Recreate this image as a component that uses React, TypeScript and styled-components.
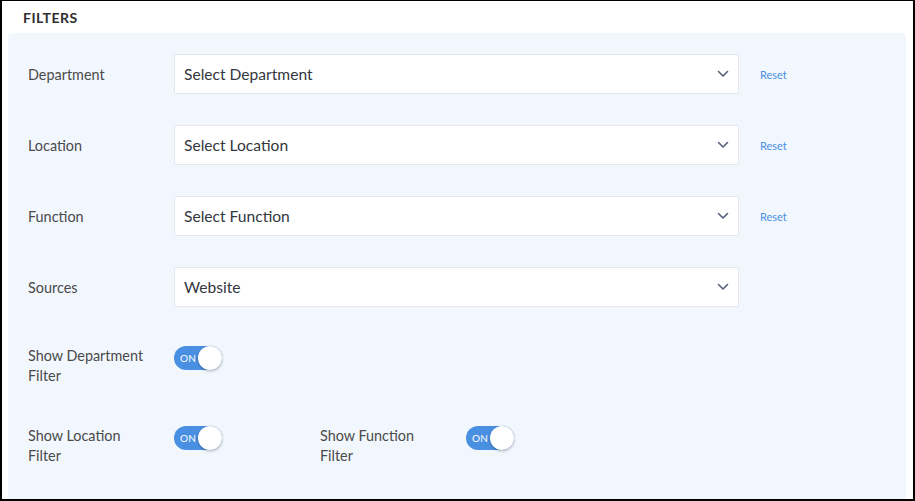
import { useState } from 'react'
import styled, { createGlobalStyle } from 'styled-components'

const GlobalStyle = createGlobalStyle`
	html, body {
		margin: 0;
		padding: 0;
		background: #ffffff;
	}
	body {
		font-family: 'Lato', 'Open Sans', sans-serif;
		color: #4a4a4a;
	}
`

type SelectRow = {
	label: string
	value: string
	resettable: boolean
}

const selectRows: SelectRow[] = [
	{ label: 'Department', value: 'Select Department', resettable: true },
	{ label: 'Location', value: 'Select Location', resettable: true },
	{ label: 'Function', value: 'Select Function', resettable: true },
	{ label: 'Sources', value: 'Website', resettable: false },
]

function Chevron() {
	return (
		<svg width="12" height="8" viewBox="0 0 12 8" fill="none">
			<path
				d="M1.5 1.5L6 6L10.5 1.5"
				stroke="#55607a"
				strokeWidth="1.6"
				strokeLinecap="round"
				strokeLinejoin="round"
			/>
		</svg>
	)
}

function Toggle({ initial }: { initial: boolean }) {
	const [isOn, setIsOn] = useState(initial)
	return (
		<Track $on={isOn} onClick={() => setIsOn(!isOn)}>
			<TrackText>{isOn ? 'ON' : 'OFF'}</TrackText>
			<Knob $on={isOn} />
		</Track>
	)
}

function App() {
	return (
		<>
			<GlobalStyle />
			<Frame>
				<Title>FILTERS</Title>
				<Panel>
					{selectRows.map((row) => (
						<Row key={row.label}>
							<Label>{row.label}</Label>
							<SelectBox>
								<SelectText>{row.value}</SelectText>
								<Chevron />
							</SelectBox>
							{row.resettable && <ResetLink>Reset</ResetLink>}
						</Row>
					))}
					<ToggleRow>
						<ToggleLabel>
							Show Department
							<br />
							Filter
						</ToggleLabel>
						<ToggleCell>
							<Toggle initial />
						</ToggleCell>
					</ToggleRow>
					<ToggleRow>
						<ToggleLabel>
							Show Location
							<br />
							Filter
						</ToggleLabel>
						<ToggleCell>
							<Toggle initial />
						</ToggleCell>
						<ToggleLabel>
							Show Function
							<br />
							Filter
						</ToggleLabel>
						<ToggleCell>
							<Toggle initial />
						</ToggleCell>
					</ToggleRow>
				</Panel>
			</Frame>
		</>
	)
}

const Frame = styled.div`
	box-sizing: border-box;
	width: 915px;
	height: 501px;
	border: 2px solid #000;
	border-top-width: 1px;
	display: flex;
	flex-direction: column;
	overflow: hidden;
`
const Title = styled.div`
	height: 32px;
	padding-left: 21px;
	display: flex;
	align-items: center;
	font-size: 14px;
	font-weight: 700;
	color: #2f2f2f;
	letter-spacing: 0.5px;
`
const Panel = styled.div`
	flex: 1;
	margin: 0 7px 0 6px;
	padding: 21px 0 0 20px;
	background: #f2f7fe;
	border-radius: 4px 4px 0 0;
	display: flex;
	flex-direction: column;
`
const Row = styled.div`
	display: flex;
	align-items: center;
	height: 40px;
	margin-bottom: 31px;
`
const Label = styled.div`
	width: 146px;
	font-size: 14.4px;
	color: #4a4a4a;
`
const SelectBox = styled.div`
	box-sizing: border-box;
	width: 565px;
	height: 40px;
	background: #ffffff;
	border: 1px solid #e4e8ee;
	border-radius: 2px;
	display: flex;
	align-items: center;
	justify-content: space-between;
	padding: 0 9px 0 9px;
`
const SelectText = styled.span`
	font-size: 15.6px;
	color: #333740;
`
const ResetLink = styled.a`
	margin-left: 21px;
	font-size: 11px;
	color: #4a90e2;
	cursor: pointer;
`
const ToggleRow = styled.div`
	display: flex;
	align-items: flex-start;
	margin-top: 8px;
	margin-bottom: 32px;
`
const ToggleLabel = styled.div`
	width: 146px;
	font-size: 14.4px;
	line-height: 20px;
	color: #4a4a4a;
`
const ToggleCell = styled.div`
	width: 146px;
`
const Track = styled.div<{ $on: boolean }>`
	position: relative;
	box-sizing: border-box;
	width: 48px;
	height: 24px;
	border-radius: 12px;
	background: ${(p) => (p.$on ? '#4a90e2' : '#c9ced6')};
	display: flex;
	align-items: center;
	padding-left: 6px;
	cursor: pointer;
`
const TrackText = styled.span`
	font-size: 10px;
	color: #ffffff;
	letter-spacing: 0.2px;
`
const Knob = styled.div<{ $on: boolean }>`
	position: absolute;
	top: 0;
	left: ${(p) => (p.$on ? '24px' : '0')};
	width: 24px;
	height: 24px;
	border-radius: 50%;
	background: #ffffff;
	box-shadow: 0 1px 3px rgba(0, 0, 0, 0.3);
`

export default App
